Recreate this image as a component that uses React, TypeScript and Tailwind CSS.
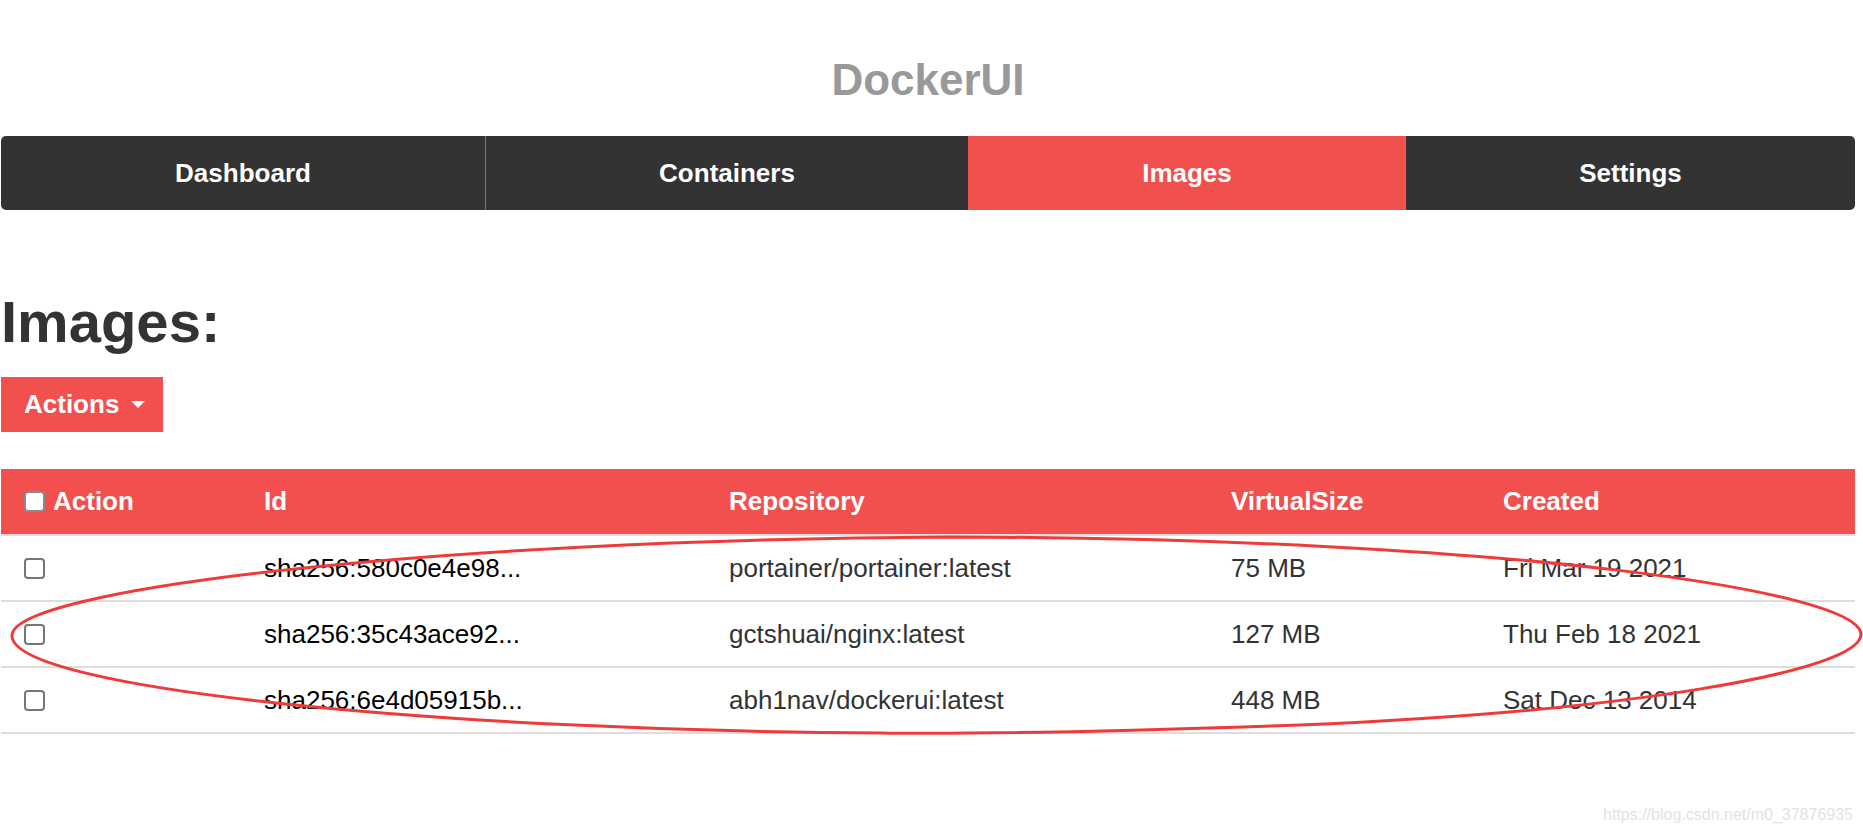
import React from "react";

const F = { fontFamily: '"Liberation Sans", Arial, sans-serif' };

function Box({ header = false }: { header?: boolean }) {
  return (
    <div
      className={`shrink-0 w-[21px] h-[21px] rounded-[4px] border-2 ${
        header ? "border-[#8a8a8a]" : "border-[#767676]"
      } bg-white`}
    />
  );
}

const rows = [
  ["sha256:580c0e4e98...", "portainer/portainer:latest", "75 MB", "Fri Mar 19 2021"],
  ["sha256:35c43ace92...", "gctshuai/nginx:latest", "127 MB", "Thu Feb 18 2021"],
  ["sha256:6e4d05915b...", "abh1nav/dockerui:latest", "448 MB", "Sat Dec 13 2014"],
];

export default function App() {
  return (
    <div className="relative w-[1863px] h-[836px] bg-white overflow-hidden" style={F}>
      <div className="pl-[1px] w-[1855px]">
        {/* Title */}
        <div className="pt-[58px] text-center text-[44px] leading-[44px] font-bold text-[#999999]">
          DockerUI
        </div>

        {/* Nav */}
        <div className="mt-[34px] h-[74px] flex rounded-[5px] overflow-hidden bg-[#333333] text-white text-[26px] font-bold">
          <div className="w-[484px] flex items-center justify-center">Dashboard</div>
          <div className="w-[483px] flex items-center justify-center border-l border-[#777777]">Containers</div>
          <div className="w-[437px] flex items-center justify-center bg-[#f24f4f] border-l border-[#f24f4f]">Images</div>
          <div className="flex-1 flex items-center justify-center border-l border-[#888888]">Settings</div>
        </div>

        {/* Heading */}
        <h2 className="mt-[83px] text-[58px] leading-[57px] font-bold text-[#333333]">Images:</h2>

        {/* Actions button */}
        <div className="mt-[27px] w-[162px] h-[55px] bg-[#f24f4f] text-white text-[26px] font-bold flex items-center pl-[23px]">
          <span>Actions</span>
          <span className="ml-[12px] w-0 h-0 border-l-[7px] border-r-[7px] border-t-[7px] border-l-transparent border-r-transparent border-t-white" />
        </div>

        {/* Table */}
        <div className="mt-[37px]">
          <div className="grid grid-cols-[263px_465px_502px_272px_1fr] h-[65px] items-center bg-[#f24f4f] text-white text-[26px] font-bold">
            <div className="pl-[23px] flex items-center gap-[8px]">
              <Box header />
              <span>Action</span>
            </div>
            <div>Id</div>
            <div>Repository</div>
            <div>VirtualSize</div>
            <div>Created</div>
          </div>
          {rows.map((r, i) => (
            <div
              key={i}
              className="grid grid-cols-[263px_465px_502px_272px_1fr] h-[66px] items-center border-t-2 border-[#dddddd] text-[26px] text-[#333333]"
            >
              <div className="pl-[23px]">
                <Box />
              </div>
              <div className="text-black">{r[0]}</div>
              <div>{r[1]}</div>
              <div>{r[2]}</div>
              <div>{r[3]}</div>
            </div>
          ))}
          <div className="border-t-2 border-[#dddddd]" />
        </div>
      </div>

      {/* Annotation ellipse */}
      <svg
        className="absolute left-0 top-0 pointer-events-none"
        width="1863"
        height="836"
        viewBox="0 0 1863 836"
      >
        <path
          d="M 950 537 C 1500 538 1858 590 1861 634 C 1862 672 1620 712 1300 725 C 1100 732 950 734 880 733 C 450 731 14 690 12 636 C 10 590 420 540 950 537 Z"
          fill="none"
          stroke="#ef3a3a"
          strokeWidth="3"
        />
      </svg>

      {/* Watermark */}
      <div className="absolute top-[805px] right-[10px] text-[16px] leading-[20px] text-[#e3e3e3]">
        https://blog.csdn.net/m0_37876935
      </div>
    </div>
  );
}
